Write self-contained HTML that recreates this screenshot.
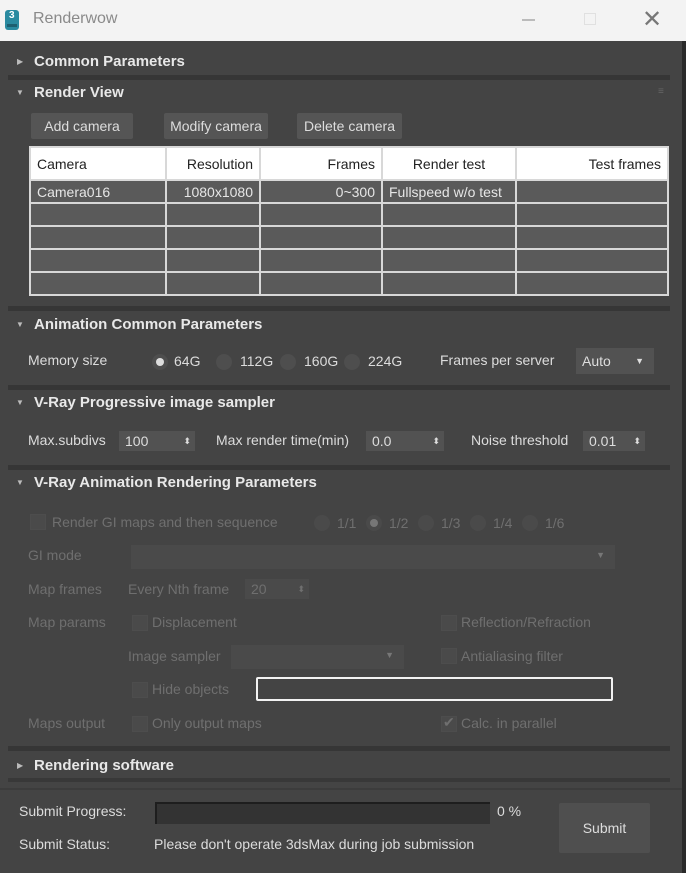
<!DOCTYPE html>
<html><head><style>
*{margin:0;padding:0;box-sizing:border-box}
body{width:686px;height:873px;background:#3a3a3a;font-family:"Liberation Sans",sans-serif;font-size:14px;color:#dcdcdc;position:relative;overflow:hidden}
.a{position:absolute;white-space:nowrap}
.hdr{font-weight:bold;font-size:15px;color:#e8e8e8}
.tri{font-size:8px;color:#bbb}
.dis{color:#6f6f6f}
.sep{position:absolute;left:8px;width:662px;height:5px;background:#363636}
.btn{position:absolute;background:#555;color:#ddd;height:26px;line-height:26px;text-align:center;border-radius:2px}
.rad{position:absolute;width:16px;height:16px;border-radius:50%;background:#4e4e4e}
.spin{position:absolute;background:#525252;height:20px;line-height:20px;padding-left:6px;color:#ddd}
.cb{position:absolute;width:16px;height:16px;background:#4a4a4a;border:1px solid #4d4d4d}
td{border-right:2px solid #d8d8d8;border-bottom:2px solid #d8d8d8;height:23px;padding:0 6px;color:#e6e6e6}
</style></head><body>
<div class="a" style="left:0;top:0;width:686px;height:41px;background:#f3f3f3"></div>
<div class="a" style="left:5px;top:10px;width:14px;height:20px;background:#2a8aa0;border-radius:3px"></div>
<div class="a" style="left:9px;top:10px;font-size:10px;color:#fff;font-weight:bold">3</div>
<div class="a" style="left:7px;top:24px;width:10px;height:3px;background:#1d5f70"></div>
<div class="a" style="left:33px;top:10px;font-size:16px;color:#8a8a8a">Renderwow</div>
<div class="a" style="left:522px;top:19px;width:13px;height:2px;background:#bbb"></div>
<div class="a" style="left:584px;top:13px;width:12px;height:12px;border:1px solid #e0e0e0"></div>
<div class="a" style="left:642px;top:5px;font-size:24px;color:#777;font-weight:300">✕</div>
<div class="a" style="left:0;top:41px;width:682px;height:832px;background:#444"></div>
<div class="a" style="left:682px;top:41px;width:4px;height:832px;background:#2a2a2a"></div>

<div class="a tri" style="left:17px;top:57px">▶</div>
<div class="a hdr" style="left:34px;top:53px">Common Parameters</div>
<div class="sep" style="top:75px"></div>
<div class="a tri" style="left:16px;top:88px">▼</div>
<div class="a hdr" style="left:34px;top:84px">Render View</div>
<div class="a" style="left:658px;top:86px;color:#666;font-size:10px">≡</div>
<div class="btn" style="left:31px;top:113px;width:102px">Add camera</div>
<div class="btn" style="left:164px;top:113px;width:104px">Modify camera</div>
<div class="btn" style="left:297px;top:113px;width:105px">Delete camera</div>
<div class="a" style="left:29px;top:146px;width:640px;height:150px;background:#5a5a5a;border:2px solid #d8d8d8;border-right:none">
<table style="border-collapse:collapse;width:638px;table-layout:fixed">
<tr style="background:#fff;color:#222"><td style="width:135px;height:32px;color:#222">Camera</td><td style="width:94px;text-align:right;color:#222">Resolution</td><td style="width:122px;text-align:right;color:#222">Frames</td><td style="width:134px;text-align:center;color:#222">Render test</td><td style="text-align:right;color:#222">Test frames</td></tr>
<tr><td>Camera016</td><td style="text-align:right">1080x1080</td><td style="text-align:right">0~300</td><td>Fullspeed w/o test</td><td></td></tr>
<tr><td></td><td></td><td></td><td></td><td></td></tr>
<tr><td></td><td></td><td></td><td></td><td></td></tr>
<tr><td></td><td></td><td></td><td></td><td></td></tr>
<tr><td></td><td></td><td></td><td></td><td></td></tr>
</table></div>
<div class="sep" style="top:306px"></div>
<div class="a tri" style="left:16px;top:320px">▼</div>
<div class="a hdr" style="left:34px;top:316px">Animation Common Parameters</div>
<div class="a" style="left:28px;top:352px">Memory size</div>
<div class="rad" style="left:152px;top:354px"></div><div class="a" style="left:156px;top:358px;width:8px;height:8px;border-radius:50%;background:#ddd"></div>
<div class="a" style="left:174px;top:353px">64G</div>
<div class="rad" style="left:216px;top:354px"></div><div class="a" style="left:240px;top:353px">112G</div>
<div class="rad" style="left:280px;top:354px"></div><div class="a" style="left:304px;top:353px">160G</div>
<div class="rad" style="left:344px;top:354px"></div><div class="a" style="left:368px;top:353px">224G</div>
<div class="a" style="left:440px;top:352px">Frames per server</div>
<div class="spin" style="left:576px;top:348px;width:78px;height:26px;line-height:26px">Auto<span style="position:absolute;right:10px;font-size:9px">▼</span></div>
<div class="sep" style="top:385px"></div>
<div class="a tri" style="left:16px;top:398px">▼</div>
<div class="a hdr" style="left:34px;top:394px">V-Ray Progressive image sampler</div>
<div class="a" style="left:28px;top:432px">Max.subdivs</div>
<div class="spin" style="left:119px;top:431px;width:76px">100<span style="position:absolute;right:4px;font-size:9px">⬍</span></div>
<div class="a" style="left:216px;top:432px">Max render time(min)</div>
<div class="spin" style="left:366px;top:431px;width:78px">0.0<span style="position:absolute;right:4px;font-size:9px">⬍</span></div>
<div class="a" style="left:471px;top:432px">Noise threshold</div>
<div class="spin" style="left:583px;top:431px;width:62px">0.01<span style="position:absolute;right:4px;font-size:9px">⬍</span></div>
<div class="sep" style="top:465px"></div>
<div class="a tri" style="left:16px;top:478px">▼</div>
<div class="a hdr" style="left:34px;top:474px">V-Ray Animation Rendering Parameters</div>
<div class="cb" style="left:30px;top:514px"></div>
<div class="a dis" style="left:52px;top:514px">Render GI maps and then sequence</div>
<div class="rad" style="left:314px;top:515px;background:#4a4a4a"></div><div class="a dis" style="left:337px;top:515px">1/1</div>
<div class="rad" style="left:366px;top:515px;background:#4a4a4a"></div><div class="a" style="left:370px;top:519px;width:8px;height:8px;border-radius:50%;background:#777"></div><div class="a dis" style="left:389px;top:515px">1/2</div>
<div class="rad" style="left:418px;top:515px;background:#4a4a4a"></div><div class="a dis" style="left:441px;top:515px">1/3</div>
<div class="rad" style="left:470px;top:515px;background:#4a4a4a"></div><div class="a dis" style="left:493px;top:515px">1/4</div>
<div class="rad" style="left:522px;top:515px;background:#4a4a4a"></div><div class="a dis" style="left:545px;top:515px">1/6</div>
<div class="a dis" style="left:28px;top:547px">GI mode</div>
<div class="a" style="left:131px;top:545px;width:484px;height:24px;background:#4a4a4a"><span style="position:absolute;right:10px;top:5px;font-size:9px;color:#777">▼</span></div>
<div class="a dis" style="left:28px;top:581px">Map frames</div>
<div class="a dis" style="left:128px;top:581px">Every Nth frame</div>
<div class="a dis" style="left:245px;top:579px;width:64px;height:20px;line-height:20px;background:#4a4a4a;padding-left:6px">20<span style="position:absolute;right:4px;font-size:9px">⬍</span></div>
<div class="a dis" style="left:28px;top:614px">Map params</div>
<div class="cb" style="left:132px;top:615px"></div><div class="a dis" style="left:152px;top:614px">Displacement</div>
<div class="cb" style="left:441px;top:615px"></div><div class="a dis" style="left:461px;top:614px">Reflection/Refraction</div>
<div class="a dis" style="left:128px;top:648px">Image sampler</div>
<div class="a" style="left:231px;top:645px;width:173px;height:24px;background:#4a4a4a"><span style="position:absolute;right:10px;top:5px;font-size:9px;color:#777">▼</span></div>
<div class="cb" style="left:441px;top:648px"></div><div class="a dis" style="left:461px;top:648px">Antialiasing filter</div>
<div class="cb" style="left:132px;top:682px"></div><div class="a dis" style="left:152px;top:681px">Hide objects</div>
<div class="a" style="left:256px;top:677px;width:357px;height:24px;border:2px solid #f2f2f2;border-radius:2px;background:#444"></div>
<div class="a dis" style="left:28px;top:715px">Maps output</div>
<div class="cb" style="left:132px;top:716px"></div><div class="a dis" style="left:152px;top:715px">Only output maps</div>
<div class="cb" style="left:441px;top:716px"></div><div class="a dis" style="left:443px;top:714px">✔</div><div class="a dis" style="left:461px;top:715px">Calc. in parallel</div>
<div class="sep" style="top:746px"></div>
<div class="a tri" style="left:17px;top:761px">▶</div>
<div class="a hdr" style="left:34px;top:757px">Rendering software</div>
<div class="a" style="left:8px;top:778px;width:662px;height:4px;background:#383838"></div>
<div class="a" style="left:0;top:788px;width:682px;height:2px;background:#3c3c3c"></div>
<div class="a" style="left:19px;top:803px">Submit Progress:</div>
<div class="a" style="left:155px;top:802px;width:335px;height:22px;background:#333;border-top:2px solid #1e1e1e;border-left:2px solid #1e1e1e"></div>
<div class="a" style="left:497px;top:803px">0 %</div>
<div class="btn" style="left:559px;top:803px;width:91px;height:50px;line-height:50px;background:#4f4f4f">Submit</div>
<div class="a" style="left:19px;top:836px">Submit Status:</div>
<div class="a" style="left:154px;top:836px">Please don't operate 3dsMax during job submission</div>
</body></html>
